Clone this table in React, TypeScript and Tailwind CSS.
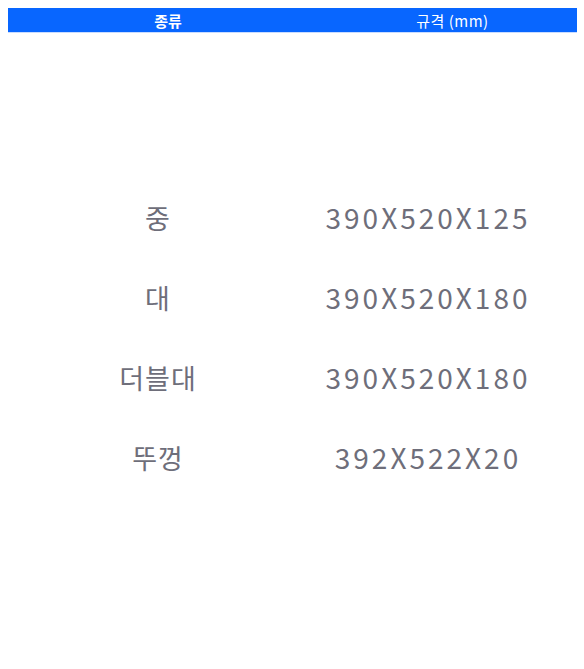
import React from 'react';

const rows = [
  { kind: '중', size: '390X520X125' },
  { kind: '대', size: '390X520X180' },
  { kind: '더블대', size: '390X520X180' },
  { kind: '뚜껑', size: '392X522X20' },
];

export default function App() {
  return (
    <div
      className="w-[584px] h-[669px] bg-white pt-2 pl-2 pr-[7px]"
      style={{ fontFamily: '"Noto Sans CJK KR", "Noto Sans", sans-serif' }}
    >
      <div className="flex h-[25px] bg-[#0866ff] border-b border-[#c9dcff] text-white text-[15px] leading-none">
        <div className="w-[320px] flex items-center justify-center font-semibold">종류</div>
        <div className="flex-1 flex items-center justify-center tracking-[0.5px]">규격 (mm)</div>
      </div>

      <div className="pt-[144px]">
        {rows.map((r) => (
          <div key={r.kind + r.size} className="flex h-[80px] items-center text-[#6e6e7a]">
            <div className="w-[300px] text-center text-[27px] leading-none tracking-[1px]">{r.kind}</div>
            <div className="w-[240px] text-center text-[28px] leading-none tracking-[3px]">{r.size}</div>
          </div>
        ))}
      </div>
    </div>
  );
}
